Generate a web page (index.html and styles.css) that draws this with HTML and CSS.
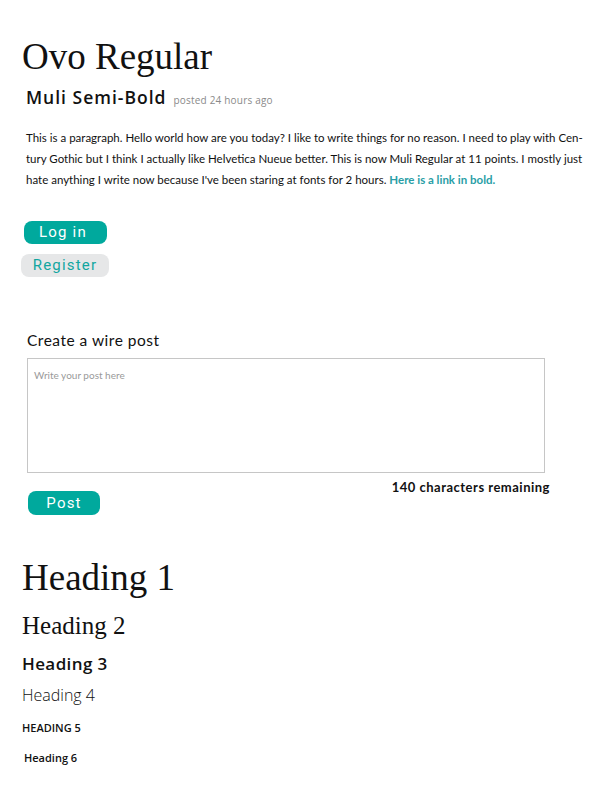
FILE: index.html
```html
<!DOCTYPE html>
<html>
<head>
<meta charset="utf-8">
<link rel="stylesheet" href="styles.css">
</head>
<body>
<main class="page">
  <h1 class="title">Ovo Regular</h1>
  <div class="byline"><span class="author">Muli Semi-Bold</span><span class="meta">posted 24 hours ago</span></div>
  <p class="para">This is a paragraph. Hello world how are you today? I like to write things for no reason. I need to play with Cen-<br>tury Gothic but I think I actually like Helvetica Nueue better. This is now Muli Regular at 11 points. I mostly just<br>hate anything I write now because I've been staring at fonts for 2 hours. <a class="link" href="#">Here is a link in bold.</a></p>
  <div class="buttons">
    <button class="btn btn-primary login">Log in</button>
    <button class="btn btn-secondary register">Register</button>
  </div>
  <section class="wire">
    <div class="wire-label">Create a wire post</div>
    <div class="wire-box"><span class="placeholder">Write your post here</span></div>
    <div class="wire-footer">
      <button class="btn btn-primary post">Post</button>
      <span class="remaining">140 characters remaining</span>
    </div>
  </section>
  <section class="headings">
    <h1 class="h1">Heading 1</h1>
    <h2 class="h2">Heading 2</h2>
    <h3 class="h3">Heading 3</h3>
    <h4 class="h4">Heading 4</h4>
    <h5 class="h5">Heading 5</h5>
    <h6 class="h6">Heading 6</h6>
  </section>
</main>
</body>
</html>
```
FILE: styles.css
```css
* { box-sizing: border-box; }
html, body { margin: 0; padding: 0; background: #fff; }
body { font-family: "Lato", "Open Sans", sans-serif; color: #111; }
.page { padding: 34px 0 0 22px; width: 612px; }
.title {
  font-family: "Liberation Serif", serif;
  font-weight: normal;
  font-size: 37px;
  line-height: 46px;
  margin: 0;
  color: #111;
}
.byline { margin: 3px 0 0 4px; display: flex; align-items: baseline; gap: 7px; line-height: 28px; }
.author { font-family: "Open Sans", sans-serif; font-weight: 600; font-size: 17.5px; letter-spacing: 1px; }
.meta { font-family: "Open Sans", sans-serif; font-size: 10px; color: #8a8a8a; letter-spacing: 0.2px; }
.para {
  margin: 13px 0 0 4px;
  font-family: "Lato", sans-serif;
  font-size: 11.5px;
  line-height: 21px;
  color: #111;
  white-space: nowrap;
}
.link { color: #2a9ea6; font-weight: bold; text-decoration: none; }
.buttons { display: flex; flex-direction: column; align-items: flex-start; gap: 10px; margin-top: 31px; }
.btn {
  border: none;
  font-family: "Roboto", sans-serif;
  font-size: 15px;
  line-height: 23px;
  height: 23px;
  border-radius: 8px;
  padding: 0;
  letter-spacing: 1.2px;
}
.btn-primary { background: #00a99d; color: #fff; }
.btn-secondary { background: #e6e7e8; color: #12a6a0; }
.login { width: 83px; margin-left: 2px; text-align: left; padding-left: 15px; }
.register { width: 88px; margin-left: -1px; font-size: 15px; }
.wire { margin: 53px 0 0 5px; width: 523px; }
.wire-label { font-family: "Lato", sans-serif; font-size: 15.5px; line-height: 20px; letter-spacing: 0.5px; }
.wire-box {
  margin-top: 8px;
  width: 518px;
  height: 115px;
  border: 1px solid #c6c6c6;
  padding: 10px 6px;
}
.placeholder { font-family: "Lato", sans-serif; font-size: 10px; color: #9a9a9a; display: block; line-height: 12px; }
.wire-footer { display: flex; justify-content: space-between; align-items: flex-start; }
.post { width: 72px; margin-top: 18px; margin-left: 1px; height: 24px; line-height: 24px; }
.remaining { font-family: "Lato", sans-serif; font-weight: bold; font-size: 13px; line-height: 16px; margin-top: 6px; letter-spacing: 0.5px; }
.headings { margin-top: 41px; }
.headings h1, .headings h2, .headings h3, .headings h4, .headings h5, .headings h6 { margin: 0; color: #111; }
.h1 { font-family: "Liberation Serif", serif; font-weight: normal; font-size: 37px; line-height: 44px; }
.h2 { font-family: "Liberation Serif", serif; font-weight: normal; font-size: 25px; line-height: 30px; margin-top: 11px !important; }
.h3 { font-family: "Open Sans", sans-serif; font-weight: 600; font-size: 17px; line-height: 22px; letter-spacing: 0.4px; margin-top: 12px !important; }
.h4 { font-family: "Open Sans", sans-serif; font-weight: 300; font-size: 16px; line-height: 22px; margin-top: 9px !important; }
.h5 { font-family: "Open Sans", sans-serif; font-weight: 600; font-size: 11px; line-height: 14px; text-transform: uppercase; margin-top: 15px !important; }
.h6 { font-family: "Open Sans", sans-serif; font-weight: 600; font-size: 11px; line-height: 14px; margin-top: 16px !important; margin-left: 2px !important; }
```
